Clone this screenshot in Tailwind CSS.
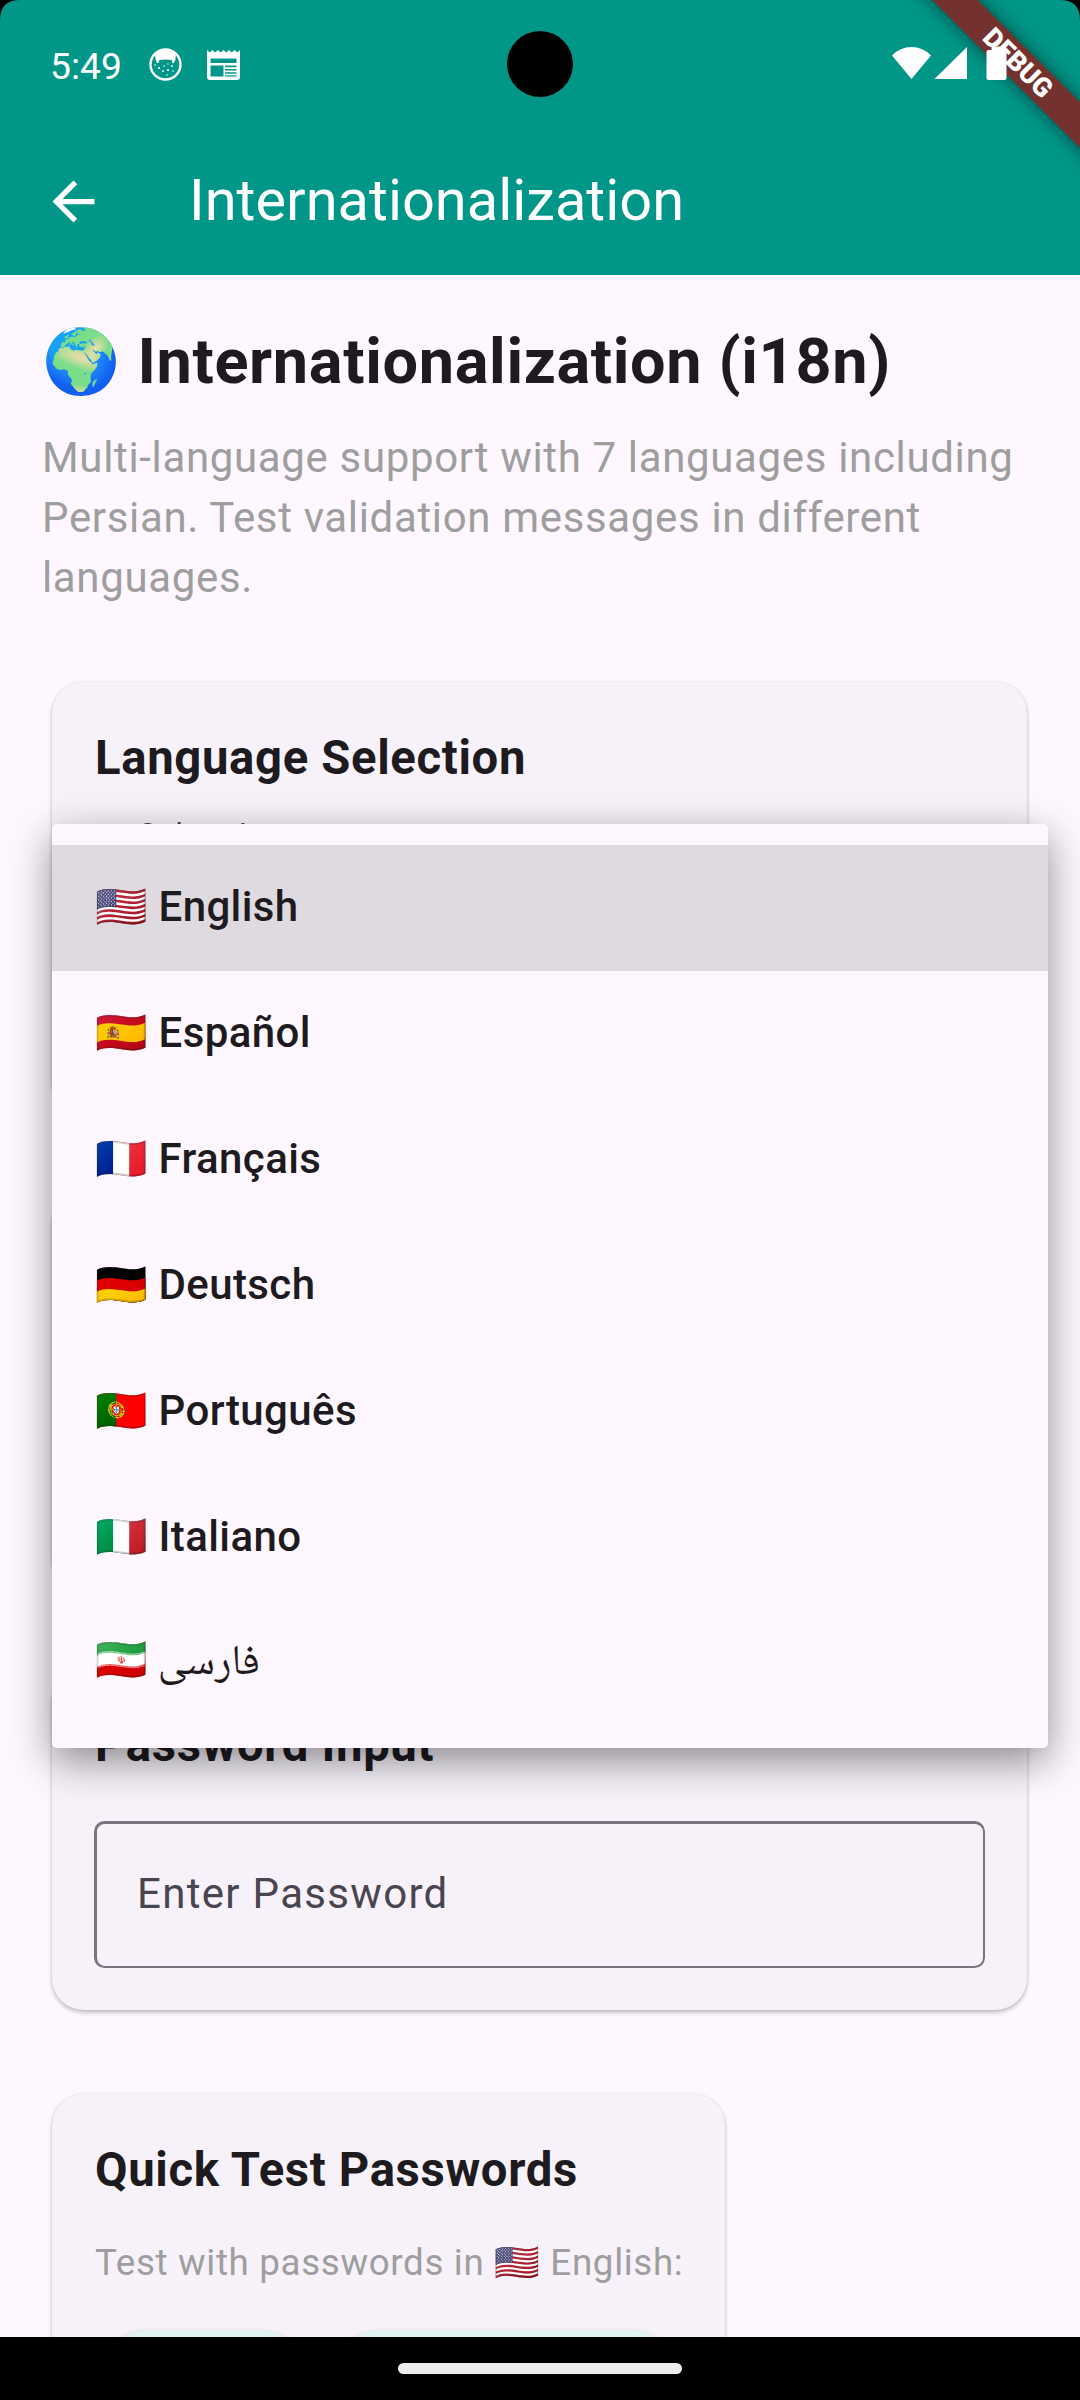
<!DOCTYPE html>
<html lang="en">
<head>
<meta charset="utf-8">
<title>Internationalization</title>
<script src="https://cdn.jsdelivr.net/npm/@tailwindcss/browser@4"></script>
</head>
<body class="bg-black">
<div class="relative flex h-[2400px] w-[1080px] flex-col overflow-hidden bg-[#fef7ff] font-['Roboto','Noto_Color_Emoji','Noto_Naskh_Arabic',sans-serif] text-[#1d1b20]">

  <!-- Status bar and app bar -->
  <header class="flex h-[275px] shrink-0 flex-col bg-[#009688] text-white">
    <div class="flex h-32 items-center pl-[50px]">
      <span class="pt-[5px] text-[37.25px] leading-none">5:49</span>
      <svg class="ml-[27px] size-[33px]" viewBox="0 0 33 33" fill="none"><circle cx="16.500" cy="16.500" r="15" stroke="#fff" stroke-width="2.400"/><path d="M7 4 16.500 1 26 4l.8 4q0 4-1.800 7h-1.500l-.8-3q-6-.8-12.400 0l-.8 3H8Q6.200 12 6.200 8z" fill="#fff"/><g fill="#fff"><circle cx="10" cy="20" r="1"/><circle cx="15" cy="18" r=".8"/><circle cx="19" cy="22" r="1.100"/><circle cx="23" cy="18" r=".9"/><circle cx="14" cy="23" r=".9"/><circle cx="18" cy="27" r=".8"/><circle cx="24" cy="23" r=".8"/><circle cx="6" cy="17" r=".8"/><circle cx="19" cy="16" r=".7"/></g></svg>
      <svg class="ml-[25px] mt-[2px] h-[30px] w-[33px]" viewBox="0 0 33 30"><path fill="#fff" fill-rule="evenodd" d="M0 0 2.700 2.500 5.500 0 8.200 2.500 11 0l2.700 2.500L16.500 0l2.700 2.500L22 0l2.700 2.500L27.500 0l2.700 2.500L33 0V27q0 3-3 3H3q-3 0-3-3zM3.500 8.500v4.500h26V8.500zM3.500 15.500V26.500h13V15.500zM18 15.500v1.800h11.500v-1.800zM18 19v1.600h11.500V19zM18 22.200v1.600h11.500v-1.600zM18 25.200v1.300h11.500v-1.300z"/></svg>
    </div>
    <div class="flex h-[147px] items-center pl-[42px]">
      <svg class="size-[63px]" viewBox="0 0 24 24" fill="#fff"><path d="M20 11H7.830l5.590-5.590L12 4l-8 8 8 8 1.410-1.410L7.830 13H20v-2z"/></svg>
      <h1 class="ml-[84px] pb-[2px] text-[57.75px] leading-none">Internationalization</h1>
    </div>
  </header>

  <main class="flex h-[2062px] shrink-0 flex-col overflow-hidden px-[42px] pt-[42px] tracking-[0.656px]">
    <h2 class="h-[90px] text-[63px] leading-[90px] font-bold">🌍 Internationalization (i18n)</h2>
    <p class="mt-[21px] text-[42px] leading-[60px] text-[#9e9e9e]">Multi-language support with 7 languages including Persian. Test validation messages in different languages.</p>

    <div class="mt-[74px] mr-[11px] ml-[10px] flex shrink-0 flex-col gap-[83px]">
      <section class="h-[428px] rounded-[31.5px] bg-[#f7f2fa] px-[43px] pt-[43px] shadow-[0_3px_4px_rgba(0,0,0,.2),0_0_3px_rgba(0,0,0,.12)]">
        <h3 class="text-[47.25px] leading-[67px] font-bold">Language Selection</h3>
        <fieldset class="mt-[27px] h-[160px] rounded-[10.5px] border-[2.6px] border-[#79747e] pl-[32px]">
          <legend class="px-[9px] text-[31.5px] leading-[31.5px] tracking-[0.9px] text-[#49454f]">Select Language</legend>
        </fieldset>
      </section>

      <section class="h-[394px] rounded-[31.5px] bg-[#f7f2fa] shadow-[0_3px_4px_rgba(0,0,0,.2),0_0_3px_rgba(0,0,0,.12)]"></section>

      <section class="h-[340px] rounded-[31.5px] bg-[#f7f2fa] px-[42px] pt-[42px] shadow-[0_3px_4px_rgba(0,0,0,.2),0_0_3px_rgba(0,0,0,.12)]">
        <h3 class="pl-px text-[47.25px] leading-[67px] font-bold">Password Input</h3>
        <div class="mt-[42px] flex h-[147px] items-center rounded-[10.5px] border-2 border-t-3 border-l-3 border-[#79747e] pb-[2px] pl-[40px] text-[42px] leading-[60px] tracking-[1.3125px] text-[#49454f]">Enter Password</div>
      </section>

      <section class="mt-px h-[420px] w-[673px] rounded-[31.5px] bg-[#f7f2fa] px-[43px] pt-[43px] shadow-[0_3px_4px_rgba(0,0,0,.2),0_0_3px_rgba(0,0,0,.12)]">
        <h3 class="text-[47.25px] leading-[67px] font-bold">Quick Test Passwords</h3>
        <p class="mt-[33px] h-[52px] text-[36.75px] leading-[52px] whitespace-nowrap text-[#9e9e9e]">Test with passwords in 🇺🇸 English:</p>
        <div class="mt-[41px] flex gap-[18px]">
          <div class="h-[105px] w-[216px] rounded-full bg-[#e0f2f1] shadow-[0_1px_4px_rgba(0,0,0,.15)]"></div>
          <div class="h-[105px] w-[354px] rounded-full bg-[#e0f2f1] shadow-[0_1px_4px_rgba(0,0,0,.15)]"></div>
        </div>
      </section>
    </div>
  </main>

  <!-- Gesture navigation -->
  <nav class="flex h-[63px] shrink-0 justify-center bg-black pt-[26px]">
    <div class="h-[11px] w-[284px] rounded-full bg-[#ececec]"></div>
  </nav>

  <!-- Language menu -->
  <ul class="absolute top-[824px] left-[52px] h-[924px] w-[996px] rounded-[5px] bg-[#fef7ff] pt-[21px] text-[42px] leading-[63px] font-medium tracking-[0.394px] shadow-[0_13px_40px_rgba(0,0,0,.44)]">
    <li class="h-[126px] bg-[#dedae0] px-[43px] pt-[30px]">🇺🇸 English</li>
    <li class="h-[126px] px-[43px] pt-[30px]">🇪🇸 Español</li>
    <li class="h-[126px] px-[43px] pt-[30px]">🇫🇷 Français</li>
    <li class="h-[126px] px-[43px] pt-[30px]">🇩🇪 Deutsch</li>
    <li class="h-[126px] px-[43px] pt-[30px]">🇵🇹 Português</li>
    <li class="h-[126px] px-[43px] pt-[30px]">🇮🇹 Italiano</li>
    <li class="h-[126px] px-[43px] pt-[27px]">🇮🇷 <span class="font-['Noto_Naskh_Arabic'] text-[42.5px] font-normal">فارسی</span></li>
  </ul>

  <!-- Debug banner -->
  <div class="absolute top-[47px] left-[838px] flex h-8 w-[360px] rotate-45 items-center justify-center bg-[#74322f] text-[26.8px] leading-none font-black text-white shadow-[0_0_18px_rgba(0,0,0,.55)]">DEBUG</div>

  <!-- System icons and display cut-outs -->
  <svg class="absolute top-[45px] left-[891px] h-9 w-[116px]" viewBox="0 0 116 36" fill="#fff"><path d="M20.500 34 1 10.500Q9 2 20.500 2T40 10.500zM76 2v32H43.500zM100.500 1.500h9v3.500h4q2 0 2 2V33q0 2-2 2h-16q-2 0-2-2V7q0-2 2-2h3z"/></svg>
  <div class="absolute top-[31px] left-[507px] size-[66px] rounded-full bg-black"></div>
  <svg class="absolute top-0 left-0 size-5" viewBox="0 0 20 20"><path d="M0 0h20Q0 0 0 20z"/></svg>
  <svg class="absolute top-0 right-0 size-5" viewBox="0 0 20 20"><path d="M0 0h20v20Q20 0 0 0z"/></svg>
</div>
</body>
</html>
